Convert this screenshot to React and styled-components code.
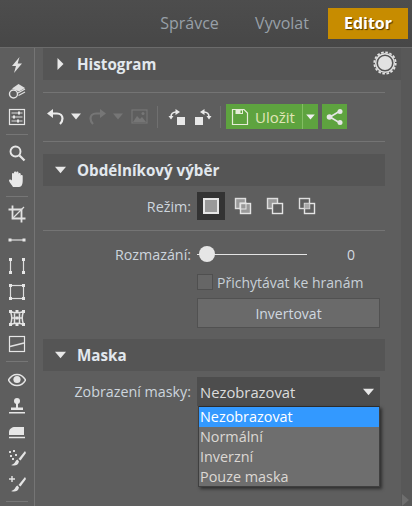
import React from 'react';
import styled, { createGlobalStyle } from 'styled-components';

const Global = createGlobalStyle`
  html, body { margin: 0; padding: 0; background: #5e5e5e; }
  body { font-family: "Open Sans", "Noto Sans", sans-serif; font-size: 14px; color: #d4dae0; }
`;

const Page = styled.div`
  width: 412px;
  height: 506px;
  overflow: hidden;
  display: flex;
  flex-direction: column;
`;
const TopBar = styled.div`
  flex: none;
  background: linear-gradient(#4d4d4d, #474747);
  border-bottom: 1px solid #6b6b6b;
  display: flex;
  align-items: flex-start;
  justify-content: flex-end;
  padding: 8px 4px 0 0;
  height: 39px;
`;
const Tab = styled.div`
  height: 31px;
  line-height: 31px;
  font-size: 16px;
  color: ${(p) => (p.$active ? '#fff' : '#98a0a8')};
  font-weight: ${(p) => (p.$active ? 700 : 400)};
  background: ${(p) => (p.$active ? '#c78c00' : 'transparent')};
  width: ${(p) => p.$w}px;
  text-align: center;
  text-shadow: ${(p) => (p.$active ? '1px 1px 1px #4a3500' : 'none')};
`;
const Body = styled.div`
  flex: 1;
  display: flex;
  min-height: 0;
`;
const Sidebar = styled.div`
  width: 34px;
  flex: none;
  border-right: 1px solid #757575;
  padding-top: 4px;
  display: flex;
  flex-direction: column;
  align-items: center;
`;
const ToolSlot = styled.div`
  height: 26px;
  width: 100%;
  flex: none;
  display: flex;
  align-items: center;
  justify-content: center;
  color: #e6e6e6;
`;
const ToolDivider = styled.div`
  width: 22px;
  height: 1px;
  flex: none;
  background: #767676;
  margin: ${(p) => (p.$tight ? '4px 0 4px' : '4px 0 5px')};
`;
const Main = styled.div`
  flex: 1;
  position: relative;
  padding-left: 8px;
`;
const ScrollTrack = styled.div`
  width: 11px;
  flex: none;
  background: #585858;
  position: relative;
`;
const ScrollArrow = styled.div`
  position: absolute;
  left: 1px;
  bottom: 0;
  border-left: 7px solid #6e6e6e;
  border-top: 6px solid transparent;
  border-bottom: 6px solid transparent;
`;
const SectionHeader = styled.div`
  height: 32px;
  width: ${(p) => (p.$wide ? 358 : 342)}px;
  margin-top: ${(p) => p.$top || 0}px;
  background: #555555;
  display: flex;
  align-items: center;
  font-weight: 700;
  font-size: 15.2px;
  color: #e2e8ee;
  position: relative;
`;
const HeaderCaret = styled.span`
  width: 34px;
  flex: none;
  display: flex;
  justify-content: center;
`;
const GearWrap = styled.div`
  position: absolute;
  right: 4px;
  top: 3px;
  display: flex;
`;
const Rule = styled.div`
  width: 342px;
  height: 1px;
  background: #747474;
  margin-top: ${(p) => p.$top || 0}px;
`;
const Toolbar = styled.div`
  height: 25px;
  margin-top: 11px;
  display: flex;
  align-items: center;
  width: 342px;
  margin-bottom: 12px;
  padding-left: 4px;
  box-sizing: border-box;
`;
const ToolGap = styled.span`
  display: flex;
  margin-left: ${(p) => p.$left}px;
  transform: ${(p) => (p.$flip ? 'scaleX(-1)' : 'none')};
`;
const ToolSep = styled.div`
  width: 1px;
  height: 22px;
  background: #707070;
  margin: 0 ${(p) => p.$right}px 0 ${(p) => p.$left}px;
`;
const SaveButton = styled.div`
  width: 92px;
  height: 25px;
  background: #5ea33f;
  display: flex;
  align-items: center;
  color: #e2e6b8;
  font-size: 15px;
`;
const SaveGlyph = styled.span`
  display: flex;
  margin: 0 1px 0 5px;
`;
const SaveLabel = styled.span`
  padding-left: 5px;
`;
const SaveSplit = styled.span`
  height: 25px;
  width: 15px;
  border-left: 1px solid #83bd63;
  display: flex;
  align-items: center;
  justify-content: center;
  margin-left: auto;
`;
const ShareButton = styled.div`
  width: 25px;
  height: 25px;
  margin-left: 4px;
  background: #5ea33f;
  display: flex;
  align-items: center;
  justify-content: center;
`;
const FormRow = styled.div`
  display: flex;
  align-items: center;
  height: ${(p) => p.$h}px;
  margin-top: ${(p) => p.$top || 0}px;
  width: 342px;
`;
const FieldLabel = styled.div`
  width: 148px;
  flex: none;
  text-align: right;
  margin-right: 6px;
  color: #cdd5dd;
  font-size: 14.3px;
`;
const ModeButton = styled.div`
  width: 28px;
  height: 28px;
  margin-right: 4px;
  display: flex;
  align-items: center;
  justify-content: center;
  background: ${(p) => (p.$active ? '#333333' : 'transparent')};
`;
const SliderTrack = styled.div`
  width: 110px;
  height: 1px;
  background: #e4e4e4;
  position: relative;
`;
const SliderThumb = styled.div`
  position: absolute;
  left: 2px;
  top: -8px;
  width: 16px;
  height: 16px;
  border-radius: 50%;
  background: #e6e6e6;
`;
const SliderValue = styled.div`
  width: 44px;
  margin-left: 22px;
  text-align: center;
  color: #d4dae0;
`;
const CheckBox = styled.div`
  width: 14px;
  height: 14px;
  flex: none;
  background: #666666;
  border: 1px solid #4f4f4f;
  margin-right: 4px;
`;
const CheckLabel = styled.div`
  color: #c8d0d8;
  font-size: 14px;
`;
const PushButton = styled.div`
  width: 183px;
  height: 30px;
  box-sizing: border-box;
  background: #6a6a6a;
  border: 1px solid #515151;
  display: flex;
  align-items: center;
  justify-content: center;
  color: #d0d8e0;
  font-size: 14px;
`;
const SelectBox = styled.div`
  width: 183px;
  height: 29px;
  box-sizing: border-box;
  background: #4d4d4d;
  display: flex;
  align-items: center;
  justify-content: space-between;
  padding: 0 6px 0 3px;
  color: #dcdcdc;
  font-size: 14.8px;
`;
const DropList = styled.div`
  position: absolute;
  left: 163px;
  top: 358px;
  width: 182px;
  height: 81px;
  box-sizing: border-box;
  background: #6e6e6e;
  border: 1px solid #3f3f3f;
  border-top-color: #2c2c2c;
  box-shadow: 2px 2px 3px rgba(0, 0, 0, 0.5);
`;
const DropItem = styled.div`
  height: 20px;
  line-height: 20px;
  padding-left: 1px;
  font-size: 14.4px;
  color: ${(p) => (p.$active ? '#ffffff' : '#dcd8d4')};
  background: ${(p) => (p.$active ? '#3399ff' : 'transparent')};
`;

const Caret = ({ dir = 'down', color = '#e8e8e8', size = 10 }) => (
  <svg width={dir === 'down' ? size : size - 3} height={dir === 'down' ? size - 3 : size + 2} viewBox={dir === 'down' ? '0 0 10 7' : '0 0 7 12'}>
    <path d={dir === 'down' ? 'M0 0.5h10L5 6.5z' : 'M0.5 0v12L6.5 6z'} fill={color} />
  </svg>
);

const Svg = ({ children, w = 18, h = 18, vb = '0 0 18 18', style }) => (
  <svg width={w} height={h} viewBox={vb} fill="none" style={style}>{children}</svg>
);

const tools = [
  <Svg key="bolt"><path d="M11.5 1L4 10h4l-2 7 8-9.500h-4.300z" fill="#e2e2e2" /></Svg>,
  <Svg key="layers"><path d="M4 6.500L10.500 2 17 6l-6 3.500z" fill="#dedede" /><path d="M10 11l7-4M10.500 13.500l6.500-3.500" stroke="#dedede" strokeWidth="1.300" /><circle cx="5.500" cy="12" r="4" stroke="#e4e4e4" strokeWidth="1.400" /></Svg>,
  <Svg key="sliders"><rect x="1.500" y="1.500" width="15" height="15" stroke="#e6e6e6" strokeWidth="1.200" /><path d="M3.500 5h11M3.500 9h11M3.500 13h11" stroke="#dcdcdc" strokeWidth="1" /><path d="M10 3.500h2v3h-2zM5 7.500h2v3H5zM9 11.500h2v3H9z" fill="#e6e6e6" /></Svg>,
  'div',
  <Svg key="search"><circle cx="7.500" cy="7.500" r="5" stroke="#e6e6e6" strokeWidth="1.900" /><path d="M11.500 11.500L16.500 16.500" stroke="#e6e6e6" strokeWidth="2.300" /></Svg>,
  <Svg key="hand"><path d="M5 17c-1-2-4-5-4-6.500S3 9 4 10.500V4c0-1.500 2-1.500 2 0V2.500c0-1.500 2.300-1.500 2.300 0v0c0-1.500 2.200-1.500 2.200 0V4c0-1.500 2.200-1.500 2.200 0v2c0-1.200 2-1.200 2 0v5c0 3-1.200 6-3.500 6z" fill="#e8e8e8" /></Svg>,
  'divt',
  <Svg key="crop"><path d="M0.500 4.500H13.500V17.500M4.500 0.500V13.500H17.500" stroke="#e2e2e2" strokeWidth="1.800" /><path d="M5 13L16 2" stroke="#dedede" strokeWidth="1.200" /></Svg>,
  <Svg key="line"><path d="M2 9h14" stroke="#dedede" strokeWidth="1.200" /><path d="M0.500 7.500h3v3h-3zM14.500 7.500h3v3h-3z" fill="#e6e6e6" /></Svg>,
  <Svg key="ruler"><path d="M2.500 2v14M15.500 2v14" stroke="#dedede" strokeWidth="1.200" /><path d="M1 1h3v3H1zM14 1h3v3h-3zM1 14h3v3H1zM14 14h3v3h-3z" fill="#e6e6e6" /></Svg>,
  <Svg key="rect"><rect x="2.500" y="2.500" width="13" height="13" stroke="#dedede" strokeWidth="1.200" /><path d="M1 1h3v3H1zM14 1h3v3h-3zM1 14h3v3H1zM14 14h3v3h-3z" fill="#e6e6e6" /></Svg>,
  <Svg key="mesh"><path d="M2.500 2.500Q9 5 15.500 2.500Q13 9 15.500 15.500Q9 13 2.500 15.500Q5 9 2.500 2.500zM6.500 3V15M11.500 3V15M3 9H15" stroke="#e2e2e2" strokeWidth="1.500" /><path d="M1 1h3v3H1zM14 1h3v3h-3zM1 14h3v3H1zM14 14h3v3h-3zM7.500 1h3v3h-3zM7.500 14h3v3h-3zM7.500 7.500h3v3h-3z" fill="#e6e6e6" /></Svg>,
  <Svg key="grad"><rect x="1.500" y="1.500" width="15" height="15" stroke="#e6e6e6" strokeWidth="1.200" /><path d="M2 11.500L16 8" stroke="#e0e0e0" strokeWidth="1.400" /></Svg>,
  'div',
  <Svg key="eye"><path d="M0.500 9C3 4.500 6 3.500 9 3.500S15 4.500 17.500 9C15 13.500 12 14.500 9 14.500S3 13.500 0.500 9z" stroke="#e4e4e4" strokeWidth="1.500" /><circle cx="9" cy="8.500" r="3.600" fill="#e4e4e4" /></Svg>,
  <Svg key="stamp"><circle cx="9" cy="4" r="3" fill="#e6e6e6" /><path d="M8 6h2v5H8zM3 10.500h12v2.500H3zM1 15h16v1.500H1z" fill="#e6e6e6" /></Svg>,
  <Svg key="iron"><path d="M1 12V9c0-3 3-5 6-5h9v8z" fill="#e6e6e6" /><path d="M1 14.500h16" stroke="#e6e6e6" strokeWidth="1.500" /></Svg>,
  <Svg key="brushdots"><path d="M17 2l-6.500 8 2 1.500L18 4z" fill="#e4e4e4" /><path d="M9.500 10.500c-2 .5-2 3-3.500 4s-3 1.500-3 1.500c3 1 7 1 8-3.500z" fill="#e4e4e4" /><path d="M1 2h2v2H1zM5 1h2v2H5zM2 6h2v2H2zM7 5h2v2H7zM4 9h2v2H4z" fill="#dcdcdc" /></Svg>,
  <Svg key="brushplus"><path d="M17 2l-6.500 8 2 1.500L18 4z" fill="#e4e4e4" /><path d="M9.500 10.500c-2 .5-2 3-3.500 4s-3 1.500-3 1.500c3 1 7 1 8-3.500z" fill="#e4e4e4" /><path d="M4 1v6M1 4h6" stroke="#e4e4e4" strokeWidth="1.400" /></Svg>,
  'div',
];

const ArcLeft = ({ color }) => (
  <Svg w={17} h={17} vb="0 0 17 17">
    <path d="M3 5.500h7c3.500 0 5.500 2.500 5.500 5 0 2-1 4-2.500 5.500" stroke={color} strokeWidth="2.200" />
    <path d="M0 5.500L6 1v9z" fill={color} />
  </Svg>
);
const RotateIcon = ({ flip }) => (
  <Svg w={18} h={18} style={flip ? { transform: 'scaleX(-1)' } : undefined}>
    <path d="M3 9c0-3 2-5 5-5" stroke="#ebebeb" strokeWidth="1.600" />
    <path d="M7.500 1v6L12 4z" fill="#ebebeb" />
    <path d="M0.500 8h5L3 11.500z" fill="#ebebeb" />
    <rect x="9" y="9" width="8" height="8" fill="#e8e8e8" />
  </Svg>
);
const Overlap = ({ kind }) => (
  <Svg>
    <rect x="1.500" y="1.500" width="10" height="10" stroke="#dedede" strokeWidth="1.400" fill={kind === 'intersect' ? 'none' : '#999'} />
    <rect x="6.500" y="6.500" width="10" height="10" stroke="#e4e4e4" strokeWidth="1.400" fill={kind === 'union' ? '#999' : kind === 'subtract' ? '#5e5e5e' : 'none'} />
    {kind === 'intersect' && <rect x="6.500" y="6.500" width="5" height="5" fill="#a8a8a8" />}
    {kind === 'union' && <rect x="6" y="6" width="6" height="6" stroke="#e4e4e4" strokeWidth="1" />}
  </Svg>
);

const App = () => (
  <Page>
    <Global />
    <TopBar>
      <Tab $w={93}>Správce</Tab>
      <Tab $w={92}>Vyvolat</Tab>
      <Tab $w={80} $active>Editor</Tab>
    </TopBar>
    <Body>
      <Sidebar>
        {tools.map((t, i) =>
          t === 'div' ? <ToolDivider key={i} /> : t === 'divt' ? <ToolDivider key={i} $tight /> : <ToolSlot key={i}>{t}</ToolSlot>,
        )}
      </Sidebar>
      <Main>
        <SectionHeader $wide>
          <HeaderCaret><Caret dir="right" /></HeaderCaret>
          Histogram
          <GearWrap>
            <Svg w={24} h={24} vb="0 0 24 24">
              <circle cx="12" cy="12" r="7" fill="#e2e2e2" />
              <circle cx="12" cy="12" r="9.300" stroke="#e2e2e2" strokeWidth="1.500" />
              <circle cx="12" cy="12" r="10.700" stroke="#e2e2e2" strokeWidth="1.800" strokeDasharray="2.600 1.600" />
            </Svg>
          </GearWrap>
        </SectionHeader>
        <Rule $top={12} />
        <Toolbar>
          <ArcLeft color="#ebebeb" />
          <ToolGap $left={7}><Caret /></ToolGap>
          <ToolGap $left={8} $flip><ArcLeft color="#767676" /></ToolGap>
          <ToolGap $left={7}><Caret color="#767676" /></ToolGap>
          <ToolGap $left={8}>
            <Svg w={17} h={15} vb="0 0 17 15">
              <rect x="1" y="1" width="15" height="13" stroke="#767676" strokeWidth="1.200" />
              <path d="M2 13l4-6 3 3 2-2 4 5z" fill="#767676" />
              <circle cx="12" cy="4.500" r="1.500" fill="#767676" />
            </Svg>
          </ToolGap>
          <ToolSep $left={9} $right={10} />
          <RotateIcon />
          <ToolGap $left={8}><RotateIcon flip /></ToolGap>
          <ToolSep $left={8} $right={5} />
          <SaveButton>
            <SaveGlyph>
              <Svg w={18} h={18}>
                <path d="M1.500 1.500H13L16.500 5V16.500H1.500z" stroke="#e6ecd8" strokeWidth="1.200" />
                <path d="M4.500 1.500H12V6H4.500z" fill="#e6ecd8" />
                <path d="M9.500 2.500h1.500v2.500H9.500z" fill="#5ea33f" />
              </Svg>
            </SaveGlyph>
            <SaveLabel>Uložit</SaveLabel>
            <SaveSplit><Caret color="#f0f0f0" size={9} /></SaveSplit>
          </SaveButton>
          <ShareButton>
            <Svg w={18} h={18}>
              <path d="M4 9l10-6M4 9l10 6" stroke="#e6e6e6" strokeWidth="1.500" />
              <circle cx="3.500" cy="9" r="2.800" fill="#e6e6e6" />
              <circle cx="14" cy="3.500" r="2.500" fill="#e6e6e6" />
              <circle cx="14" cy="14.500" r="2.500" fill="#e6e6e6" />
            </Svg>
          </ShareButton>
        </Toolbar>
        <Rule />
        <SectionHeader $top={12}>
          <HeaderCaret><Caret size={11} /></HeaderCaret>
          Obdélníkový výběr
        </SectionHeader>
        <FormRow $h={28} $top={6}>
          <FieldLabel>Režim:</FieldLabel>
          <ModeButton $active>
            <Svg>
              <rect x="2" y="2" width="14" height="14" stroke="#e6e6e6" strokeWidth="2" fill="#999" />
            </Svg>
          </ModeButton>
          <ModeButton><Overlap kind="union" /></ModeButton>
          <ModeButton><Overlap kind="subtract" /></ModeButton>
          <ModeButton><Overlap kind="intersect" /></ModeButton>
        </FormRow>
        <Rule $top={10} />
        <FormRow $h={20} $top={13}>
          <FieldLabel>Rozmazání:</FieldLabel>
          <SliderTrack><SliderThumb /></SliderTrack>
          <SliderValue>0</SliderValue>
        </FormRow>
        <FormRow $h={16} $top={10}>
          <FieldLabel />
          <CheckBox />
          <CheckLabel>Přichytávat ke hranám</CheckLabel>
        </FormRow>
        <FormRow $h={30} $top={8}>
          <FieldLabel />
          <PushButton>Invertovat</PushButton>
        </FormRow>
        <SectionHeader $top={11}>
          <HeaderCaret><Caret size={11} /></HeaderCaret>
          Maska
        </SectionHeader>
        <FormRow $h={29} $top={6}>
          <FieldLabel>Zobrazení masky:</FieldLabel>
          <SelectBox>
            Nezobrazovat
            <Caret size={11} />
          </SelectBox>
        </FormRow>
        <DropList>
          <DropItem $active>Nezobrazovat</DropItem>
          <DropItem>Normální</DropItem>
          <DropItem>Inverzní</DropItem>
          <DropItem>Pouze maska</DropItem>
        </DropList>
      </Main>
      <ScrollTrack><ScrollArrow /></ScrollTrack>
    </Body>
  </Page>
);

export default App;
